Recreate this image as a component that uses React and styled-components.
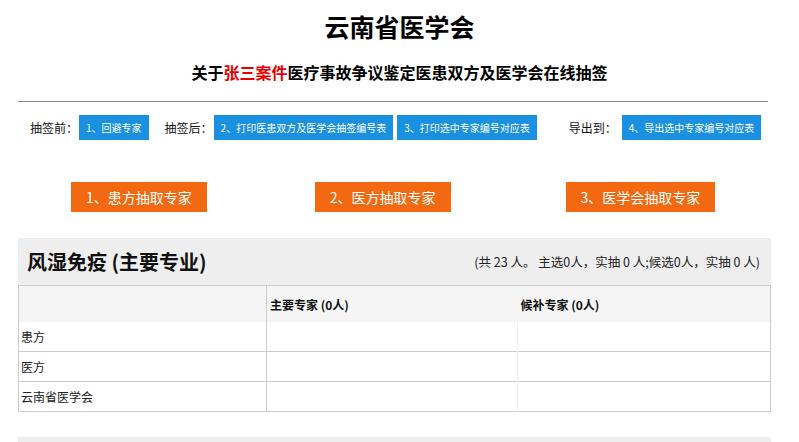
import React from "react";
import styled, { createGlobalStyle } from "styled-components";

const GlobalStyle = createGlobalStyle`
  body {
    margin: 0;
    background: #fff;
    font-family: "Noto Sans CJK SC", "Liberation Sans", sans-serif;
    color: #000;
  }
`;

const Page = styled.div`
  width: 799px;
  display: flex;
  flex-direction: column;
`;

const Title = styled.h1`
  margin: 10px 0 0;
  font-size: 25px;
  line-height: 32px;
  font-weight: 700;
  text-align: center;
`;

const Subtitle = styled.h2`
  margin: 19px 0 0;
  font-size: 16px;
  line-height: 22px;
  font-weight: 700;
  text-align: center;
`;

const Red = styled.span`
  color: #e60000;
`;

const Rule = styled.div`
  margin: 18px 31px 0 18px;
  height: 1px;
  background: #8a8a8a;
`;

const Toolbar = styled.div`
  display: flex;
  align-items: center;
  margin-top: 13px;
  padding-left: 30px;
  height: 25px;
`;

const Label = styled.span`
  font-size: 12px;
  color: #111;
  margin-left: ${(p) => p.$ml || 0}px;
  margin-right: 1px;
  white-space: nowrap;
`;

const BlueButton = styled.button`
  height: 25px;
  padding: 0 7px;
  margin-left: ${(p) => p.$ml || 0}px;
  border: none;
  background: #1a90e0;
  color: #fff;
  font-family: inherit;
  font-size: 10px;
  white-space: nowrap;
  cursor: pointer;
`;

const ActionRow = styled.div`
  display: flex;
  margin-top: 42px;
  padding-left: 71px;
`;

const OrangeButton = styled.button`
  height: 30px;
  padding: 0 15px;
  margin-left: ${(p) => p.$ml || 0}px;
  border: none;
  background: #f26911;
  color: #fff;
  font-family: inherit;
  font-size: 14px;
  white-space: nowrap;
  cursor: pointer;
`;

const Panel = styled.section`
  margin: 26px 28px 0 18px;
`;

const PanelHead = styled.div`
  height: 47px;
  background: #eeeeee;
  display: flex;
  align-items: center;
  justify-content: space-between;
  padding: 0 11px 0 9px;
`;

const PanelTitle = styled.h3`
  margin: 0;
  font-size: 20px;
  font-weight: 700;
  color: #111;
`;

const Stats = styled.span`
  font-size: 12.5px;
  color: #222;
`;

const Table = styled.table`
  width: 100%;
  border-collapse: collapse;
  table-layout: fixed;
  border: 1px solid #cccccc;
  font-size: 12px;
`;

const HeadCell = styled.th`
  height: 36px;
  padding: 0 3px;
  background: #f5f5f5;
  text-align: left;
  font-weight: 700;
  color: #111;
  border-left: ${(p) => (p.$line ? "1px solid #cccccc" : "none")};
`;

const Row = styled.tr`
  border-top: ${(p) => (p.$first ? "none" : "1px solid #cccccc")};
`;

const Cell = styled.td`
  height: 29px;
  padding: 0 2px;
  color: #222;
  border-left: ${(p) =>
    p.$line === "strong" ? "1px solid #cccccc" : p.$line === "faint" ? "1px solid #f0f0f0" : "none"};
`;

const NextPanel = styled.div`
  margin: 25px 28px 0 18px;
  height: 47px;
  background: #eeeeee;
`;

const rows = ["患方", "医方", "云南省医学会"];

export default function App() {
  return (
    <Page>
      <GlobalStyle />
      <Title>云南省医学会</Title>
      <Subtitle>
        关于<Red>张三案件</Red>医疗事故争议鉴定医患双方及医学会在线抽签
      </Subtitle>
      <Rule />
      <Toolbar>
        <Label>抽签前：</Label>
        <BlueButton>1、回避专家</BlueButton>
        <Label $ml={16}>抽签后：</Label>
        <BlueButton>2、打印医患双方及医学会抽签编号表</BlueButton>
        <BlueButton $ml={4}>3、打印选中专家编号对应表</BlueButton>
        <Label $ml={32}>导出到：</Label>
        <BlueButton $ml={4}>4、导出选中专家编号对应表</BlueButton>
      </Toolbar>
      <ActionRow>
        <OrangeButton>1、患方抽取专家</OrangeButton>
        <OrangeButton $ml={108}>2、医方抽取专家</OrangeButton>
        <OrangeButton $ml={115}>3、医学会抽取专家</OrangeButton>
      </ActionRow>
      <Panel>
        <PanelHead>
          <PanelTitle>风湿免疫 (主要专业)</PanelTitle>
          <Stats>(共 23 人。 主选0人，实抽 0 人;候选0人，实抽 0 人)</Stats>
        </PanelHead>
        <Table>
          <colgroup>
            <col style={{ width: "248px" }} />
            <col style={{ width: "251px" }} />
            <col />
          </colgroup>
          <thead>
            <tr>
              <HeadCell />
              <HeadCell $line>主要专家 (0人)</HeadCell>
              <HeadCell>候补专家 (0人)</HeadCell>
            </tr>
          </thead>
          <tbody>
            {rows.map((name, i) => (
              <Row key={name} $first={i === 0}>
                <Cell>{name}</Cell>
                <Cell $line="strong" />
                <Cell $line="faint" />
              </Row>
            ))}
          </tbody>
        </Table>
      </Panel>
      <NextPanel />
    </Page>
  );
}
